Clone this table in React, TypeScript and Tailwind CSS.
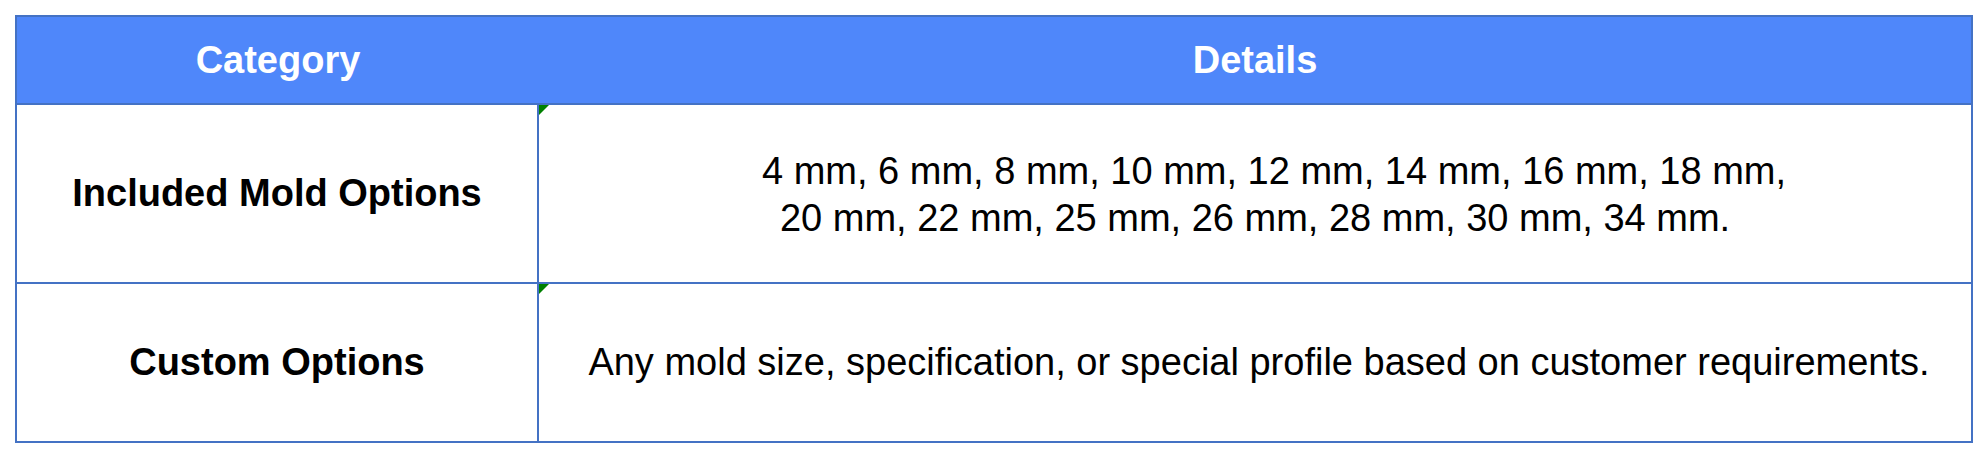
import React from 'react';

const moldLines = [
  '4 mm, 6 mm, 8 mm, 10 mm, 12 mm, 14 mm, 16 mm, 18 mm,',
  '20 mm, 22 mm, 25 mm, 26 mm, 28 mm, 30 mm, 34 mm.',
];

/** Small green corner marker, like the spreadsheet note indicator. */
const CornerMark: React.FC = () => (
  <svg className="absolute left-0 top-0" width="10" height="10" viewBox="0 0 10 10">
    <polygon points="0,0 10,0 0,10" fill="#008000" />
  </svg>
);

const App: React.FC = () => {
  return (
    <div
      className="w-[1988px] h-[458px] bg-white pl-[15px] pt-[15px] text-black"
      style={{ fontFamily: '"Liberation Sans", Arial, sans-serif' }}
    >
      <div className="w-[1958px] border-2 border-[#4472C4] flex flex-col">
        {/* header */}
        <div className="h-[88px] flex bg-[#4F87FA] border-b-2 border-[#4472C4] text-white font-bold text-[38px]">
          <div className="w-[522px] flex items-center justify-center">Category</div>
          <div className="flex-1 flex items-center justify-center">Details</div>
        </div>

        {/* row 1 */}
        <div className="h-[179px] flex border-b-2 border-[#4472C4]">
          <div className="w-[522px] border-r-2 border-[#4472C4] flex items-center justify-center font-bold text-[38px]">
            Included Mold Options
          </div>
          <div className="relative flex-1 flex flex-col items-center justify-center text-[38px] leading-[47px] pt-[2px]">
            <CornerMark />
            <div className="pl-[38px]">{moldLines[0]}</div>
            <div>{moldLines[1]}</div>
          </div>
        </div>

        {/* row 2 */}
        <div className="h-[157px] flex">
          <div className="w-[522px] border-r-2 border-[#4472C4] flex items-center justify-center font-bold text-[38px]">
            Custom Options
          </div>
          <div className="relative flex-1 flex items-center justify-center text-[38px]">
            <CornerMark />
            <div className="pl-[8px]">
              Any mold size, specification, or special profile based on customer requirements.
            </div>
          </div>
        </div>
      </div>
    </div>
  );
};

export default App;
